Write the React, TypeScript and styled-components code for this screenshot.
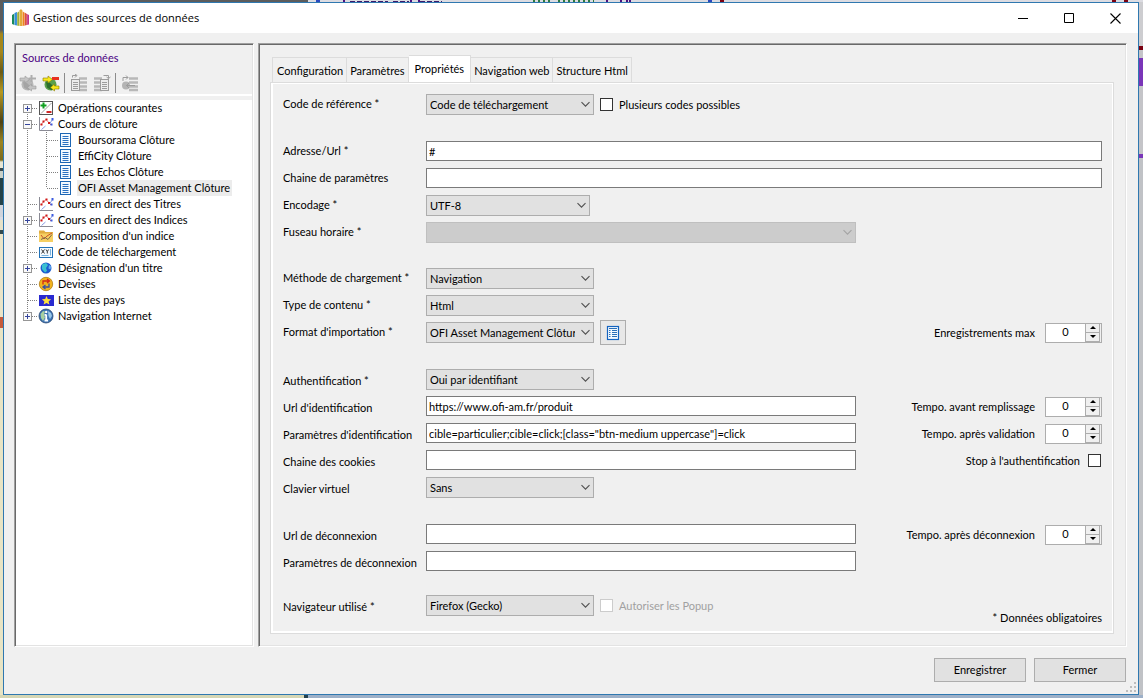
import React, { useId, useState } from "react";
import styled, { createGlobalStyle, css } from "styled-components";

const GlobalStyle = createGlobalStyle`
  *, *::before, *::after { box-sizing: border-box; }
  body { margin: 0; overflow-x: hidden; }
  body, button, input, select {
    font-family: Lato, "Liberation Sans", Arial, sans-serif;
    font-size: 11px;
    line-height: 16px;
    color: #000;
  }
`;

/* ---------- desktop and window frame ---------- */

const Desktop = styled.div`
  display: grid;
  grid-template-columns: 3px minmax(0, 1fr) 4px;
  grid-template-rows: 2px 1fr 3px;
  min-height: 100vh;
  background: #c9ccd2;
`;

const TopStrip = styled.svg`
  grid-column: 1 / -1;
  display: block;
  width: 100%;
  height: 2px;
`;

const LeftStrip = styled.div`
  background: linear-gradient(
    #5c5c5c 0 28px, #a5871c 32px 50px, #6b5a14 70px, #b89a22 90px, #4e4213 120px, #9c8420 140px,
    #7c6a1a 158px, #e8e6d4 160px 166px, #3a4a4e 166px 169px, #c9d0c8 169px 176px, #234248 176px 203px,
    #cfd4dc 203px 215px, #d8dce4 215px 218px, #e6e2c8 218px 228px, #31494d 228px 232px,
    #eae4c8 232px 315px, #c65a3a 315px 326px, #e8e4c4 326px
  );
`;

const RightStrip = styled.div`
  background: linear-gradient(
    #cdcdd0 0 44px, #7a0010 44px 48px, #c4c4c8 48px 56px, #7a35b8 56px 84px, #c4c4c8 84px 152px,
    #7a35b8 152px 156px, #c0c2c6 156px
  );
`;

const BottomStrip = styled.div`
  grid-column: 1 / -1;
  background: linear-gradient(90deg, #d5d6b4 0 304px, #24414f 304px 308px, #9db0c8 308px);
`;

const Window = styled.main`
  display: flex;
  flex-direction: column;
  border: 1px solid #2f78b0;
  background: #f0f0f0;
`;

const TitleBar = styled.header`
  display: flex;
  align-items: center;
  height: 30px;
  padding-left: 8px;
  background: #fff;
`;

const Title = styled.h1`
  flex: 1;
  margin: 0 0 0 4px;
  font: 400 11px/16px "Open Sans", "Noto Sans", sans-serif;
`;

const CaptionButton = styled.button`
  display: grid;
  place-items: center;
  width: 46px;
  height: 30px;
  padding: 0;
  border: 0;
  background: transparent;
`;

const Panels = styled.div`
  flex: 1;
  display: grid;
  grid-template-columns: 240px minmax(0, 1fr);
  gap: 4px;
  padding: 10px 11px 0 10px;
`;

const Sunken = styled.section`
  display: flex;
  flex-direction: column;
  border: 1px solid;
  border-color: #a0a0a0 #fff #fff #a0a0a0;
  box-shadow: inset 1px 1px #696969, inset -1px -1px #e3e3e3;
  padding: 1px;
`;

const Footer = styled.footer`
  position: relative;
  display: flex;
  justify-content: flex-end;
  gap: 8px;
  padding: 11px 12px 12px;
`;

const PushButton = styled.button`
  width: 92px;
  height: 24px;
  padding: 0;
  border: 1px solid #adadad;
  background: #e1e1e1;
`;

const Grip = styled.svg`
  position: absolute;
  right: 1px;
  bottom: 1px;
`;

/* ---------- left panel ---------- */

const PanelTitle = styled.h2`
  margin: 5px 0 0 6px;
  font-size: 11px;
  font-weight: 400;
  line-height: 16px;
  color: #4b0082;
`;

const Toolbar = styled.div`
  display: flex;
  align-items: center;
  height: 25px;
  margin-top: 5px;
  border-bottom: 2px solid #fff;
`;

const ToolButton = styled.button`
  display: grid;
  place-items: center;
  width: 23px;
  height: 22px;
  padding: 0;
  border: 0;
  background: transparent;
`;

const ToolSeparator = styled.span`
  width: 1px;
  height: 20px;
  margin: 0 2px;
  background: #8c8c8c;
`;

const TreeView = styled.ul`
  flex: 1;
  margin: 4px 0 0;
  padding: 0;
  list-style: none;
  background: #fff;
`;

const TreeRow = styled.li`
  display: flex;
  height: 16px;
  white-space: nowrap;
  svg {
    flex: none;
  }
`;

const TreeLabel = styled.span<{ $selected?: boolean }>`
  margin-left: 3px;
  padding: 0 2px 0 1px;
  background: ${(p) => (p.$selected ? "#ececec" : "transparent")};
`;

/* ---------- tabs ---------- */

const TabArea = styled.div`
  flex: 1;
  display: flex;
  flex-direction: column;
  padding: 10px 11px 11px 10px;
`;

const TabList = styled.div`
  display: flex;
  align-items: flex-end;
  padding-left: 2px;
`;

const Tab = styled.button<{ $active?: boolean }>`
  height: 25px;
  padding: 2px 3px 0;
  border: 1px solid #dcdcdc;
  border-width: 1px 1px 0 0;
  background: #f0f0f0;
  white-space: nowrap;
  &:first-child {
    padding-left: 4px;
    border-left-width: 1px;
  }
  ${(p) =>
    p.$active &&
    css`
      height: 28px;
      margin-bottom: -1px;
      padding: 0 6px 1px;
      background: #fff;
    `}
`;

const TabPage = styled.form`
  flex: 1;
  display: flex;
  flex-direction: column;
  border: 1px solid #dcdcdc;
  box-shadow: inset 2px 1px #fff, inset -1px -2px #fff;
  padding: 11px 11px 7px 12px;
`;

/* ---------- form ---------- */

const Group = styled.div<{ $before?: number; $low?: boolean }>`
  display: grid;
  gap: 6px;
  margin-top: ${(p) => p.$before ?? 0}px;
  & > div > label:first-child {
    padding: ${(p) => (p.$low ? "2px 0 0" : "0 0 2px")};
  }
`;

const Row = styled.div`
  display: grid;
  grid-template-columns: 143px minmax(0, 430fr) minmax(0, 246fr);
  grid-template-rows: 21px;
  align-items: center;
`;

const FieldLabel = styled.label`
  white-space: nowrap;
`;

const Inline = styled.div`
  display: flex;
  align-items: center;
  gap: 6px;
  height: 21px;
  white-space: nowrap;
`;

const Side = styled.div`
  display: flex;
  align-items: center;
  justify-content: flex-end;
  gap: 10px;
  white-space: nowrap;
`;

const TextInput = styled.input<{ $full?: boolean }>`
  align-self: start;
  width: 100%;
  height: 20px;
  padding: 0 2px;
  border: 1px solid #7a7a7a;
  border-radius: 0;
  background: #fff;
  outline: 0;
  ${(p) => p.$full && "grid-column: 2 / -1;"}
`;

const SelectBox = styled.div<{ $width: string }>`
  position: relative;
  flex: none;
  width: ${(p) => p.$width};
  height: 21px;
  svg {
    position: absolute;
    right: 4px;
    top: 7px;
    pointer-events: none;
  }
`;

const NativeSelect = styled.select`
  appearance: none;
  width: 100%;
  height: 21px;
  padding: 0 18px 0 3px;
  border: 1px solid #adadad;
  border-radius: 0;
  background: #e1e1e1;
  outline: 0;
  &:disabled {
    border-color: #bfbfbf;
    background: #cccccc;
    opacity: 1;
  }
`;

const Check = styled.input`
  appearance: none;
  flex: none;
  width: 13px;
  height: 13px;
  margin: 0;
  border: 1px solid #333;
  background: #fff;
  &:checked {
    background: #333;
    box-shadow: inset 0 0 0 2px #fff;
  }
  &:disabled {
    border-color: #ccc;
  }
`;

const CheckLabel = styled.label<{ $disabled?: boolean }>`
  display: flex;
  align-items: center;
  gap: 6px;
  color: ${(p) => (p.$disabled ? "#a0a0a0" : "#000")};
`;

const SideCheckLabel = styled(CheckLabel)`
  gap: 8px;
  padding-right: 1px;
`;

const IconButton = styled.button`
  flex: none;
  display: grid;
  place-items: center;
  width: 26px;
  height: 25px;
  padding: 0;
  border: 1px solid #adadad;
  background: #e8e8e8;
`;

const SpinBox = styled.div`
  display: flex;
  width: 57px;
  height: 20px;
  border: 1px solid #adadad;
  background: #fff;
`;

const SpinInput = styled.input`
  appearance: textfield;
  flex: 1;
  min-width: 0;
  padding: 0 0 2px;
  border: 0;
  background: transparent;
  text-align: center;
  outline: 0;
  &::-webkit-inner-spin-button,
  &::-webkit-outer-spin-button {
    appearance: none;
    margin: 0;
  }
`;

const SpinButtons = styled.div`
  display: grid;
  grid-template-rows: 1fr 1fr;
  width: 16px;
  background: #f0f0f0;
`;

const SpinButton = styled.button`
  display: grid;
  place-items: center;
  margin-right: 1px;
  padding: 0;
  border: 1px solid #adadad;
  border-top-width: 0;
  background: #f0f0f0;
`;

const Note = styled.p`
  margin: -6px 0 0;
  text-align: right;
`;

/* ---------- icons ---------- */

const AppIcon = () => (
  <svg width="17" height="18" viewBox="0 0 17 18">
    <path d="M0 6l2.500-1.500V16L0 15z" fill="#1b8a5c" />
    <path d="M2.500 4L5 3v13.500l-2.500-.5z" fill="#2a88d8" />
    <path d="M5 4l2.500-2v15L5 16.500z" fill="#9fb03a" />
    <path d="M7.500 1.500L9 0l1.300 1.500V17H7.500z" fill="#e2a832" />
    <path d="M10.300 2l2.400 2v12.500l-2.400.5z" fill="#ec861e" />
    <path d="M12.700 3.500l2.200 1.500v11l-2.200.5z" fill="#d8402c" />
    <path d="M14.900 5L17 6v9.500l-2.100.5z" fill="#c03488" />
    <path d="M2.700 4.500V16M5.200 4v12M7.700 2v15M10.400 2v15M12.800 4v12M15 5.500V16" stroke="#fff" strokeOpacity=".5" strokeWidth=".6" />
  </svg>
);

const Chevron = ({ color }: { color: string }) => (
  <svg width="9" height="7" viewBox="0 0 9 7">
    <path d="M.5 1.200l4 4 4-4" fill="none" stroke={color} strokeWidth="1.100" />
  </svg>
);

const GlobeTool = ({ off }: { off?: boolean }) => {
  const c = off ? ["#b8b8b8", "#a4a4a4", "#c4c4c4", "#adadad"] : ["#5aa04c", "#2c6e2c", "#f8e81c", "#e83020"];
  const edge = off ? "#9a9a9a" : "#8a7a00";
  return (
    <svg width="18" height="18" viewBox="0 0 18 18">
      <circle cx="8.500" cy="10.500" r="6" fill={c[0]} />
      <path d="M4 8l4 1 4 4-2 3.500-5-3z" fill={c[1]} />
      <path d="M1 4h5V2l4.500 3.500L6 9V7H1z" fill={c[2]} stroke={edge} strokeWidth=".6" />
      {off ? (
        <path d="M11.500 1h2v2.500H17v2h-3.500V8h-2V5.500H9.500v-2h2z" fill={c[3]} />
      ) : (
        <rect x="10" y="3" width="7" height="3" fill={c[3]} />
      )}
      <path d="M17 12h-4.500v-2L8.500 13.500l4 3.500v-2H17z" fill={c[2]} stroke={edge} strokeWidth=".6" />
    </svg>
  );
};

const ListTool = ({ kind }: { kind: "in" | "out" | "net" }) => (
  <svg width="18" height="18" viewBox="0 0 18 18" fill="none" stroke="#9c9c9c">
    {kind === "net" ? (
      <>
        <circle cx="5" cy="11.500" r="4" fill="#b4b4b4" stroke="none" />
        <path d="M8 4.500h9M8 8.500h9M8 12.500h9M8 16h9" strokeWidth="2.400" stroke="#b8b8b8" />
        <path d="M2 7V3.500h5M5 1.500l2 2-2 2M5 11.500h9M8 9l-2.500 2.500L8 14" />
      </>
    ) : kind === "in" ? (
      <>
        <path d="M9 4.500h8M9 8.500h8M9 12.500h8M9 16h8" strokeWidth="2.400" stroke="#b8b8b8" />
        <rect x="1.500" y="5.500" width="8" height="11" fill="#ececec" />
        <path d="M3 8.500h5M3 10.500h5M3 12.500h5M3 14.500h5M2.500 3.500V1.500h4M5 0l2 1.500L5 3.500" />
      </>
    ) : (
      <>
        <path d="M1 4.500h8M1 8.500h8M1 12.500h8M1 16h8" strokeWidth="2.400" stroke="#b8b8b8" />
        <rect x="7.500" y="5.500" width="8" height="11" fill="#ececec" />
        <path d="M9 8.500h5M9 10.500h5M9 12.500h5M9 14.500h5M10.500 1.500h5v3M13.500 3l2 1.500 2-1.500" />
      </>
    )}
  </svg>
);

type IconName = "ops" | "curve" | "doc" | "folder" | "code" | "globe" | "money" | "flag" | "net";

const TreeIcon = ({ name }: { name: IconName }) => (
  <svg width="16" height="16" viewBox="0 0 16 16">
    {name === "ops" && (
      <>
        <rect x="1.500" y="1.500" width="13" height="13" fill="#fff" stroke="#555" />
        <path d="M3 13.500L13.500 3" stroke="#888" strokeWidth=".8" />
        <path d="M5.500 2.500v6M2.500 5.500h6" stroke="#12a022" strokeWidth="2" />
        <path d="M8.500 12h5" stroke="#d02828" strokeWidth="2" />
      </>
    )}
    {name === "curve" && (
      <>
        <path d="M1.500 1v13.500H15" fill="none" stroke="#8a8a94" />
        <path d="M3 8.500L8 3.500l5 5.500" fill="none" stroke="#d83030" strokeWidth=".8" strokeDasharray="1.500 .7" />
        <path d="M3.500 13.500l4-3.500M11.500 8l3-4.500" fill="none" stroke="#7a90e0" strokeWidth=".9" />
        <path d="M2.500 7.500h2v2h-2zM4.500 4.500h2v2h-2zM7.500 2.500h2v2h-2zM10 6h2v2h-2z" fill="#d01818" />
        <path d="M13.500 2h2v2.500h-2zM12.500 7.500h2v2h-2z" fill="#3a5ae0" />
      </>
    )}
    {name === "doc" && (
      <>
        <rect x="2.500" y="1.500" width="10" height="13" fill="#f4faff" stroke="#1c66b4" />
        <path d="M4.500 4.500h6M4.500 6.500h6M4.500 8.500h6M4.500 10.500h6M4.500 12.500h6" stroke="#2a70c0" />
      </>
    )}
    {name === "folder" && (
      <>
        <path d="M1 2.500h5l1.500 1.500H15v10H1z" fill="#e0ac40" />
        <path d="M1 5.500h14V14H1z" fill="#f6cf62" />
        <path d="M3 7l3 4 3-3 5-3" fill="none" stroke="#c8502c" />
        <path d="M3 11.500l4-2 3 2 4-5" fill="none" stroke="#7a6a4a" />
      </>
    )}
    {name === "code" && (
      <>
        <rect x="1.500" y="3.500" width="13" height="10" fill="#f4faff" stroke="#2272b8" />
        <path d="M3.500 5.500l3 4M6.500 5.500l-3 4M8 5.500l1.300 2 1.300-2M9.300 7.500v2" fill="none" stroke="#222" strokeWidth=".9" />
        <path d="M12.500 5v6.500M3.500 11.500h7" stroke="#7ab2dc" />
      </>
    )}
    {name === "globe" && (
      <>
        <circle cx="8" cy="8" r="5.500" fill="#1c5cd0" />
        <path d="M4 4.500l4-1.500 2 2-2 3 1 3-2 1.500L4 9z" fill="#3ac0d0" />
        <path d="M11 5l2 1.500-.5 3-2-1z" fill="#62b0f0" />
      </>
    )}
    {name === "money" && (
      <>
        <circle cx="8" cy="8" r="6.700" fill="#f2b41e" stroke="#b07c14" strokeWidth=".8" />
        <path d="M5 8.500V5h5.500M9 3l2.500 2L9 7" fill="none" stroke="#d02818" strokeWidth="1.300" />
        <path d="M11 7.500V11H6M7.500 9L5 11l2.500 2" fill="none" stroke="#3a50a0" strokeWidth="1.300" />
      </>
    )}
    {name === "flag" && (
      <>
        <rect x="1" y="3" width="15" height="11" fill="#2a2ad0" />
        <path d="M8.500 4l1.300 3.100 3.300.2-2.500 2.100.8 3.200-2.900-1.700-2.900 1.700.8-3.200-2.500-2.100 3.300-.2z" fill="#ffe23c" />
      </>
    )}
    {name === "net" && (
      <>
        <circle cx="8" cy="8" r="7" fill="#3a72b4" stroke="#27466e" strokeWidth=".8" />
        <path d="M2.500 6l2.500-3 2 .5-1 3 1 3-2 3.500-2-3z" fill="#a8d0a0" />
        <path d="M10 3l3 2 1 3-2 3-1.500-3z" fill="#9cc8e8" />
        <path d="M8.200 6.500v6M6.500 6.800h1.700M6.500 12.500h3.600" stroke="#fff" strokeWidth="1.800" fill="none" />
        <circle cx="8.200" cy="3.900" r="1.200" fill="#fff" />
      </>
    )}
  </svg>
);

const FormatIcon = () => (
  <svg width="14" height="16" viewBox="0 0 14 16">
    <rect x="1.500" y="1.500" width="11" height="13" fill="#f4faff" stroke="#1464c0" strokeWidth="1.200" />
    <path d="M3 3.500h8M6 5.500h5M6 7.500h5M6 9.500h5M6 11.500h5" stroke="#2a70b8" />
    <path d="M3 5.500h1.500M3 7.500h1.500M3 9.500h1.500M3 11.500h1.500" stroke="#2a70b8" />
  </svg>
);

/* ---------- tree ---------- */

type Node = { label: string; icon: IconName; state?: "plus" | "minus"; child?: boolean; selected?: boolean; last?: boolean };

const nodes: Node[] = [
  { label: "Opérations courantes", icon: "ops", state: "plus" },
  { label: "Cours de clôture", icon: "curve", state: "minus" },
  { label: "Boursorama Clôture", icon: "doc", child: true },
  { label: "EffiCity Clôture", icon: "doc", child: true },
  { label: "Les Echos Clôture", icon: "doc", child: true },
  { label: "OFI Asset Management Clôture", icon: "doc", child: true, selected: true, last: true },
  { label: "Cours en direct des Titres", icon: "curve" },
  { label: "Cours en direct des Indices", icon: "curve", state: "plus" },
  { label: "Composition d'un indice", icon: "folder" },
  { label: "Code de téléchargement", icon: "code" },
  { label: "Désignation d'un titre", icon: "globe", state: "plus" },
  { label: "Devises", icon: "money" },
  { label: "Liste des pays", icon: "flag" },
  { label: "Navigation Internet", icon: "net", state: "plus" },
];

const Branch = ({ node, first, end }: { node: Node; first: boolean; end: boolean }) => (
  <svg width={node.child ? 42 : 22} height="16">
    <g stroke="#808080" strokeDasharray="1 1" fill="none">
      <path d={`M11.500 ${first ? 8 : 0}V${end ? 8 : 16}`} />
      {node.child ? (
        <>
          <path d={`M30.500 0V${node.last ? 8 : 16}`} />
          <path d="M31 8.500H42" />
        </>
      ) : (
        <path d="M12 8.500H22" />
      )}
    </g>
    {node.state && (
      <>
        <rect x="7.500" y="4.500" width="8" height="8" fill="#fafafa" stroke="#969696" />
        <path d={node.state === "plus" ? "M9 8.500h5M11.500 6v5" : "M9 8.500h5"} stroke="#35459c" />
      </>
    )}
  </svg>
);

/* ---------- field helpers ---------- */

const Select = ({ id, value, width = "168px", disabled }: { id: string; value: string; width?: string; disabled?: boolean }) => (
  <SelectBox $width={width}>
    <NativeSelect id={id} disabled={disabled} defaultValue={value}>
      <option>{value}</option>
    </NativeSelect>
    <Chevron color={disabled ? "#a4a4a4" : "#505050"} />
  </SelectBox>
);

const Spinner = ({ label }: { label: string }) => {
  const id = useId();
  const [value, setValue] = useState(0);
  return (
    <Side>
      <label htmlFor={id}>{label}</label>
      <SpinBox>
        <SpinInput id={id} type="number" value={value} onChange={(e) => setValue(Number(e.target.value))} />
        <SpinButtons>
          <SpinButton type="button" aria-label="Augmenter" onClick={() => setValue(value + 1)}>
            <svg width="6" height="3"><path d="M3 0L6 3H0z" /></svg>
          </SpinButton>
          <SpinButton type="button" aria-label="Diminuer" onClick={() => setValue(Math.max(0, value - 1))}>
            <svg width="6" height="3"><path d="M0 0h6L3 3z" /></svg>
          </SpinButton>
        </SpinButtons>
      </SpinBox>
    </Side>
  );
};

const tabs = ["Configuration", "Paramètres", "Propriétés", "Navigation web", "Structure Html"];

export default function App() {
  return (
    <>
      <GlobalStyle />
      <Desktop>
        <TopStrip aria-hidden="true">
          <rect width="100%" height="2" fill="#dcdce2" />
          <rect width="308" height="2" fill="#5c5c5c" />
          <path d="M316 1h4M708 1h4" stroke="#2a48c0" strokeWidth="2" />
          <path d="M343 1h2M410 1h2M418 1h2M606 1h2M620 1h2M626 1h2M629 1h2" stroke="#4a1080" strokeWidth="2" />
          <path d="M350 1.500h38M393 1.500h16M420 1.500h22" stroke="#3a1a6a" strokeDasharray="5 2" />
          <path d="M533 1h18M558 1h36" stroke="#2c7a3c" strokeWidth="2" strokeDasharray="2 3" />
          <path d="M720 1h4M1112 1h4M1124 1h4" stroke="#7a0010" strokeWidth="2" />
        </TopStrip>
        <LeftStrip />
        <Window>
          <TitleBar>
            <AppIcon />
            <Title>Gestion des sources de données</Title>
            <CaptionButton aria-label="Réduire">
              <svg width="11" height="11"><path d="M0 5.500h10" stroke="#000" /></svg>
            </CaptionButton>
            <CaptionButton aria-label="Agrandir">
              <svg width="11" height="11"><path d="M.5.5h9v9h-9z" fill="none" stroke="#000" /></svg>
            </CaptionButton>
            <CaptionButton aria-label="Fermer la fenêtre">
              <svg width="11" height="11"><path d="M.5.5l10 10M10.500.5l-10 10" stroke="#000" strokeWidth="1.100" /></svg>
            </CaptionButton>
          </TitleBar>

          <Panels>
            <Sunken>
              <PanelTitle>Sources de données</PanelTitle>
              <Toolbar>
                <ToolButton aria-label="Ajouter une source" disabled><GlobeTool off /></ToolButton>
                <ToolButton aria-label="Supprimer une source"><GlobeTool /></ToolButton>
                <ToolSeparator />
                <ToolButton aria-label="Importer" disabled><ListTool kind="in" /></ToolButton>
                <ToolButton aria-label="Exporter" disabled><ListTool kind="out" /></ToolButton>
                <ToolSeparator />
                <ToolButton aria-label="Télécharger" disabled><ListTool kind="net" /></ToolButton>
              </Toolbar>
              <TreeView>
                {nodes.map((node, i) => (
                  <TreeRow key={node.label}>
                    <Branch node={node} first={i === 0} end={i === nodes.length - 1} />
                    <TreeIcon name={node.icon} />
                    <TreeLabel $selected={node.selected}>{node.label}</TreeLabel>
                  </TreeRow>
                ))}
              </TreeView>
            </Sunken>

            <Sunken>
              <TabArea>
                <TabList role="tablist">
                  {tabs.map((tab) => (
                    <Tab key={tab} role="tab" type="button" aria-selected={tab === "Propriétés"} $active={tab === "Propriétés"}>
                      {tab}
                    </Tab>
                  ))}
                </TabList>
                <TabPage>
                  <Group>
                    <Row>
                      <FieldLabel htmlFor="ref">Code de référence *</FieldLabel>
                      <Inline>
                        <Select id="ref" value="Code de téléchargement" />
                        <CheckLabel><Check type="checkbox" />Plusieurs codes possibles</CheckLabel>
                      </Inline>
                    </Row>
                  </Group>

                  <Group $before={26}>
                    <Row>
                      <FieldLabel htmlFor="url">Adresse/Url *</FieldLabel>
                      <TextInput id="url" $full defaultValue="#" />
                    </Row>
                    <Row>
                      <FieldLabel htmlFor="params">Chaine de paramètres</FieldLabel>
                      <TextInput id="params" $full />
                    </Row>
                    <Row>
                      <FieldLabel htmlFor="enc">Encodage *</FieldLabel>
                      <Select id="enc" value="UTF-8" width="164px" />
                    </Row>
                    <Row>
                      <FieldLabel htmlFor="zone">Fuseau horaire *</FieldLabel>
                      <Select id="zone" value="" width="100%" disabled />
                    </Row>
                  </Group>

                  <Group $before={25}>
                    <Row>
                      <FieldLabel htmlFor="load">Méthode de chargement *</FieldLabel>
                      <Select id="load" value="Navigation" />
                    </Row>
                    <Row>
                      <FieldLabel htmlFor="type">Type de contenu *</FieldLabel>
                      <Select id="type" value="Html" />
                    </Row>
                    <Row>
                      <FieldLabel htmlFor="format">Format d'importation *</FieldLabel>
                      <Inline>
                        <Select id="format" value="OFI Asset Management Clôture" />
                        <IconButton type="button" aria-label="Ouvrir le format"><FormatIcon /></IconButton>
                      </Inline>
                      <Spinner label="Enregistrements max" />
                    </Row>
                  </Group>

                  <Group $before={26} $low>
                    <Row>
                      <FieldLabel htmlFor="auth">Authentification *</FieldLabel>
                      <Select id="auth" value="Oui par identifiant" />
                    </Row>
                    <Row>
                      <FieldLabel htmlFor="authUrl">Url d'identification</FieldLabel>
                      <TextInput id="authUrl" defaultValue="https://www.ofi-am.fr/produit" />
                      <Spinner label="Tempo. avant remplissage" />
                    </Row>
                    <Row>
                      <FieldLabel htmlFor="authParams">Paramètres d'identification</FieldLabel>
                      <TextInput id="authParams" defaultValue={'cible=particulier;cible=click;[class="btn-medium uppercase"]=click'} />
                      <Spinner label="Tempo. après validation" />
                    </Row>
                    <Row>
                      <FieldLabel htmlFor="cookies">Chaine des cookies</FieldLabel>
                      <TextInput id="cookies" />
                      <Side>
                        <SideCheckLabel>Stop à l'authentification<Check type="checkbox" /></SideCheckLabel>
                      </Side>
                    </Row>
                    <Row>
                      <FieldLabel htmlFor="keyboard">Clavier virtuel</FieldLabel>
                      <Select id="keyboard" value="Sans" />
                    </Row>
                  </Group>

                  <Group $before={26} $low>
                    <Row>
                      <FieldLabel htmlFor="outUrl">Url de déconnexion</FieldLabel>
                      <TextInput id="outUrl" />
                      <Spinner label="Tempo. après déconnexion" />
                    </Row>
                    <Row>
                      <FieldLabel htmlFor="outParams">Paramètres de déconnexion</FieldLabel>
                      <TextInput id="outParams" />
                    </Row>
                  </Group>

                  <Group $before={23} $low>
                    <Row>
                      <FieldLabel htmlFor="browser">Navigateur utilisé *</FieldLabel>
                      <Inline>
                        <Select id="browser" value="Firefox (Gecko)" />
                        <CheckLabel $disabled><Check type="checkbox" disabled />Autoriser les Popup</CheckLabel>
                      </Inline>
                    </Row>
                  </Group>
                  <Note>* Données obligatoires</Note>
                </TabPage>
              </TabArea>
            </Sunken>
          </Panels>

          <Footer>
            <PushButton>Enregistrer</PushButton>
            <PushButton>Fermer</PushButton>
            <Grip width="11" height="11" fill="#bdbdbd" aria-hidden="true">
              <path d="M8 0h2v2H8zM4 4h2v2H4zM8 4h2v2H8zM0 8h2v2H0zM4 8h2v2H4zM8 8h2v2H8z" />
            </Grip>
          </Footer>
        </Window>
        <RightStrip />
        <BottomStrip />
      </Desktop>
    </>
  );
}
